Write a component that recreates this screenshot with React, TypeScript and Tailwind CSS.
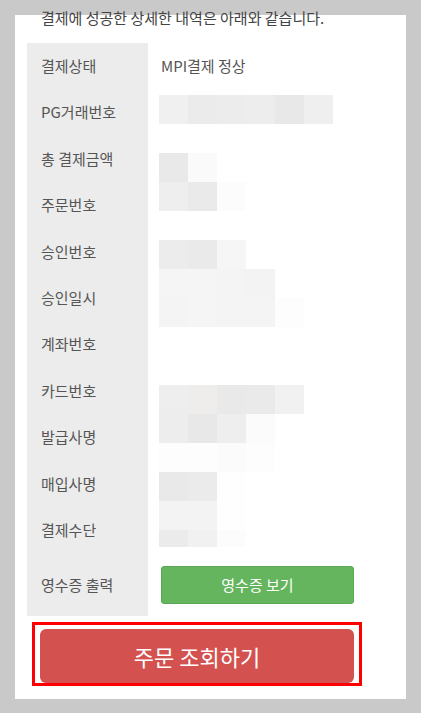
const font = { fontFamily: '"Noto Sans CJK KR", "Noto Sans", sans-serif' };

// redacted values: 29px mosaic cells, null = blank
const mosaic: (string | null)[][] = [
  ["#f0f0f0", "#ebebeb", "#ececec", "#ededed", "#e8e8e8", "#efefef"],
  [],
  ["#e9e9e9", "#fafafa"],
  ["#eeeeee", "#eaeaea", "#fcfcfc"],
  [],
  ["#ececec", "#eaeaea", "#f6f6f6"],
  ["#f5f5f5", "#f5f5f5", "#f4f4f4", "#f3f3f3"],
  ["#f4f4f4", "#f5f5f5", "#f3f4f3", "#f4f4f4", "#fdfdfd"],
  [],
  [],
  ["#eeeeee", "#eeedec", "#e9e9e9", "#eaeaea", "#f0f1f0"],
  ["#ededed", "#e8e8e8", "#eeeeee", "#fbfbfb"],
  ["#fdfdfd", "#fdfdfd", "#fbfbfb", "#fdfdfd"],
  ["#e9e9e9", "#ebebeb", "#fdfefd"],
  ["#f3f3f3", "#f3f3f3", "#fefefe"],
  ["#ebebeb", "#f1f1f1", "#fcfcfc"],
];

const rows: { label: string; value?: string }[] = [
  { label: "결제상태", value: "MPI결제 정상" },
  { label: "PG거래번호" },
  { label: "총 결제금액" },
  { label: "주문번호" },
  { label: "승인번호" },
  { label: "승인일시" },
  { label: "계좌번호" },
  { label: "카드번호" },
  { label: "발급사명" },
  { label: "매입사명" },
  { label: "결제수단" },
];

function Mosaic() {
  return (
    <div className="absolute left-[132px] top-[52px] flex flex-col">
      {mosaic.map((r, i) => (
        <div
          key={i}
          className={i === mosaic.length - 1 ? "flex h-[17px]" : "flex h-[29px]"}
        >
          {r.map((c, j) => (
            <div key={j} className="w-[29px] h-full" style={{ backgroundColor: c ?? "transparent" }} />
          ))}
        </div>
      ))}
    </div>
  );
}

export default function App() {
  return (
    <div className="min-h-[713px] bg-[#c9c9c9] pt-[15px] pb-[16px] px-[15px]" style={font}>
      <div className="flow-root bg-white px-[12px] pb-[13px]">
        <p className="-mt-[8px] mb-[14px] pl-[14px] text-[15px] leading-[22px] text-[#444]">
          결제에 성공한 상세한 내역은 아래와 같습니다.
        </p>

        <div className="relative">
          {rows.map((row) => (
            <div key={row.label} className="flex text-[15px] leading-[22.4px] text-[#555]">
              <div className="w-[121px] shrink-0 bg-[#ececec] pl-[14px] py-3">{row.label}</div>
              <div className="pl-[13px] py-3">{row.value}</div>
            </div>
          ))}
          <div className="flex text-[15px] text-[#555]">
            <div className="w-[121px] shrink-0 bg-[#ececec] pl-[14px] flex items-center h-[62.6px]">
              영수증 출력
            </div>
            <div className="pl-[13px] flex items-center">
              <button className="w-[193px] h-[38px] rounded-[3px] bg-[#65b55e] border border-[#5aa853] text-white text-[15px]">
                영수증 보기
              </button>
            </div>
          </div>
          <Mosaic />
        </div>

        <div className="ml-[5px] mt-[6px] w-[330px] h-[64px] border-[3px] border-[#ff0000] pl-[5px] pr-[5px] pt-[4px]">
          <button className="w-full h-full rounded-[6px] bg-[#d35250] text-white text-[22px]">
            주문 조회하기
          </button>
        </div>
      </div>
    </div>
  );
}
